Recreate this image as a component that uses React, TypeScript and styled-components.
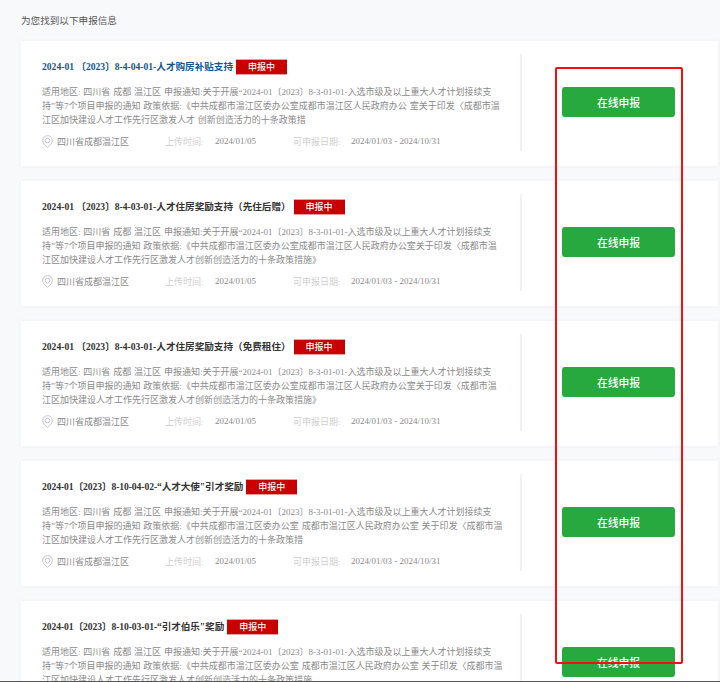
import { createGlobalStyle, styled } from 'styled-components'

const GlobalStyle = createGlobalStyle`
    html, body {
        margin: 0;
        height: 100%;
        overflow: hidden;
        background: #f8f9fb;
    }
    body {
        font-family: "Liberation Serif", "Noto Sans CJK SC", serif;
    }
`

type Item = {
    title: string
    lines: string[]
    highlight?: boolean
    tight?: boolean
}

const line1 = '适用地区: 四川省 成都 温江区 申报通知:关于开展“2024-01〔2023〕8-3-01-01-入选市级及以上重大人才计划接续支'

const items: Item[] = [
    {
        title: '2024-01 〔2023〕8-4-04-01-人才购房补贴支持',
        highlight: true,
        lines: [
            line1,
            '持”等7个项目申报的通知 政策依据:《中共成都市温江区委办公室成都市温江区人民政府办公 室关于印发〈成都市温',
            '江区加快建设人才工作先行区激发人才 创新创造活力的十条政策措',
        ],
    },
    {
        title: '2024-01 〔2023〕8-4-03-01-人才住房奖励支持（先住后赠）',
        lines: [
            line1,
            '持”等7个项目申报的通知 政策依据:《中共成都市温江区委办公室成都市温江区人民政府办公室关于印发〈成都市温',
            '江区加快建设人才工作先行区激发人才创新创造活力的十条政策措施》',
        ],
    },
    {
        title: '2024-01 〔2023〕8-4-03-01-人才住房奖励支持（免费租住）',
        lines: [
            line1,
            '持”等7个项目申报的通知 政策依据:《中共成都市温江区委办公室成都市温江区人民政府办公室关于印发〈成都市温',
            '江区加快建设人才工作先行区激发人才创新创造活力的十条政策措施》',
        ],
    },
    {
        title: '2024-01〔2023〕8-10-04-02-“人才大使"引才奖励',
        tight: true,
        lines: [
            line1,
            '持”等7个项目申报的通知 政策依据:《中共成都市温江区委办公室 成都市温江区人民政府办公室 关于印发〈成都市温',
            '江区加快建设人才工作先行区激发人才创新创造活力的十条政策措',
        ],
    },
    {
        title: '2024-01〔2023〕8-10-03-01-“引才伯乐"奖励',
        tight: true,
        lines: [
            line1,
            '持”等7个项目申报的通知 政策依据:《中共成都市温江区委办公室 成都市温江区人民政府办公室 关于印发〈成都市温',
            '江区加快建设人才工作先行区激发人才创新创造活力的十条政策措施',
        ],
    },
]

const PinIcon = () => (
    <svg width="11" height="13" viewBox="0 0 11 13" fill="none" stroke="#c4c8cc" strokeWidth="1">
        <path d="M5.5 12.4C3 10.2 .7 8.1 .7 5.5a4.8 4.8 0 0 1 9.6 0c0 2.6-2.3 4.7-4.8 6.9z" />
        <circle cx="5.5" cy="5.5" r="2.3" />
    </svg>
)

export default function App() {
    return (
        <>
            <GlobalStyle />
            <Page>
                <Heading>为您找到以下申报信息</Heading>
                <List>
                    {items.map((item) => (
                        <Card key={item.title}>
                            <Main>
                                <TitleRow>
                                    <Title $highlight={item.highlight} $tight={item.tight}>
                                        {item.title}
                                    </Title>
                                    <Badge>申报中</Badge>
                                </TitleRow>
                                <Summary>
                                    {item.lines.map((line) => (
                                        <div key={line}>{line}</div>
                                    ))}
                                </Summary>
                                <Meta>
                                    <Location>
                                        <PinIcon />
                                        <span>四川省成都温江区</span>
                                    </Location>
                                    <MetaLabel $width={50}>上传时间:</MetaLabel>
                                    <MetaValue $width={78}>2024/01/05</MetaValue>
                                    <MetaLabel $width={58}>可申报日期:</MetaLabel>
                                    <MetaValue>2024/01/03 - 2024/10/31</MetaValue>
                                </Meta>
                            </Main>
                            <Action>
                                <ApplyButton>在线申报</ApplyButton>
                            </Action>
                        </Card>
                    ))}
                </List>
                <Outline />
                <BottomEdge />
            </Page>
        </>
    )
}

// Styled component
const Page = styled.div`
    position: relative;
    box-sizing: border-box;
    width: 720px;
    height: 682px;
    overflow: hidden;
    padding: 14px 2px 0 21px;
`

const Heading = styled.h2`
    margin: 0 0 13px;
    height: 14px;
    font-size: 9.6px;
    line-height: 14px;
    font-weight: 400;
    color: #555;
`

const List = styled.div`
    display: flex;
    flex-direction: column;
    gap: 15px;
`

const Card = styled.section`
    flex: none;
    display: flex;
    height: 125px;
    box-sizing: border-box;
    padding: 13px 0 15px 21px;
    background: #fff;
    box-shadow: 0 0 3px rgba(225, 230, 238, 0.5);
`

const Main = styled.div`
    width: 478px;
    flex: none;
    border-right: 2px solid #eef2f6;
    box-sizing: content-box;
`

const TitleRow = styled.div`
    display: flex;
    align-items: center;
    gap: 3px;
    height: 24px;
    margin: 1px 0 6px;
`

const Title = styled.h3<{ $highlight?: boolean; $tight?: boolean }>`
    margin: 0;
    font-size: 9.6px;
    line-height: 16px;
    font-weight: 700;
    white-space: nowrap;
    letter-spacing: ${(props) => (props.$tight ? '-0.07px' : '0')};
    color: ${(props) => (props.$highlight ? '#14568f' : '#333')};
`

const Badge = styled.span`
    width: 51px;
    height: 16px;
    flex: none;
    text-align: center;
    font-size: 9px;
    line-height: 14px;
    font-weight: 500;
    color: #fff;
    background: #c80000;
    border-top: 1px solid #ee9c9c;
    border-bottom: 1px solid #ee9c9c;
    box-sizing: border-box;
`

const Summary = styled.div`
    font-size: 9px;
    line-height: 14px;
    color: #8a8a8a;
    white-space: nowrap;
    word-spacing: 0.6px;
`

const Meta = styled.div`
    display: flex;
    align-items: center;
    height: 16px;
    margin-top: 6px;
    font-size: 9px;
    white-space: nowrap;
`

const Location = styled.div`
    width: 123px;
    flex: none;
    display: flex;
    align-items: center;
    gap: 4px;
    color: #8a8a8a;
`

const MetaLabel = styled.span<{ $width: number }>`
    width: ${(props) => props.$width}px;
    flex: none;
    color: #cfcfcf;
`

const MetaValue = styled.span<{ $width?: number }>`
    width: ${(props) => (props.$width ? `${props.$width}px` : 'auto')};
    flex: none;
    color: #8a8a8a;
`

const Action = styled.div`
    flex: 1;
    display: flex;
    align-items: center;
    padding: 0 0 1px 40px;
`

const ApplyButton = styled.button`
    width: 113px;
    height: 30px;
    padding: 0;
    border: 0;
    border-radius: 3px;
    background: #28a93f;
    color: #fff;
    font-family: inherit;
    font-size: 10.8px;
    font-weight: 500;
`

const Outline = styled.div`
    position: absolute;
    left: 555px;
    top: 67px;
    width: 128px;
    height: 597px;
    box-sizing: border-box;
    border: 2px solid #f50f0f;
    border-radius: 2px;
    pointer-events: none;
`

const BottomEdge = styled.div`
    position: absolute;
    left: 0;
    right: 0;
    bottom: 0;
    height: 1px;
    background: #555;
`
